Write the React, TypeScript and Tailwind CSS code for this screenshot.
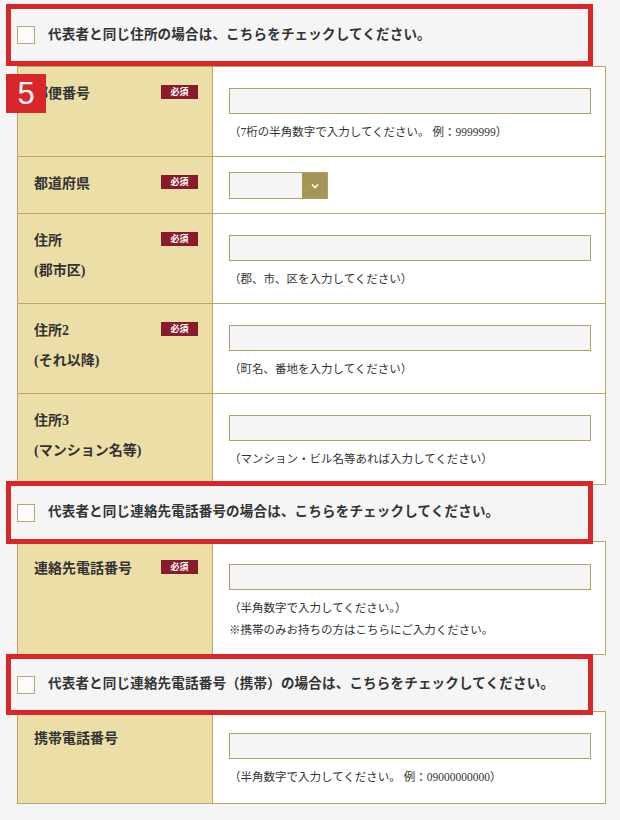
import React from 'react';

const font = { fontFamily: '"Liberation Serif", "Noto Sans CJK JP", serif' };

function CheckBar({ text, className = '' }: { text: string; className?: string }) {
  return (
    <div
      className={`relative z-10 ml-[6px] flex w-[587px] items-center border-[5px] border-[#d8272b] bg-[#f5f5f5] pl-[6px] ${className}`}
    >
      <span className="h-[18px] w-[18px] shrink-0 border-[1.5px] border-[#bba876] bg-[#fbfbfb]" />
      <span className="ml-[13px] text-[13.5px] font-bold tracking-[0.2px] text-[#333]">{text}</span>
    </div>
  );
}

interface RowProps {
  label: string[];
  required?: boolean;
  hints?: string[];
  select?: boolean;
  height: string;
  last?: boolean;
  badge?: boolean;
  inputTop?: string;
}

function Row({ label, required, hints = [], select, height, last, badge, inputTop = 'pt-[21px]' }: RowProps) {
  return (
    <div className={`relative flex ${height} ${last ? '' : 'border-b border-[#b9a66b]'}`}>
      {badge && (
        <div
          className="absolute left-[-12px] top-[7px] z-20 flex h-[39px] w-[40px] items-center justify-center bg-[#d8272b] text-[31px] leading-none text-white"
          style={{ fontFamily: '"Liberation Sans", sans-serif' }}
        >
          5
        </div>
      )}
      <div className="flex w-[195px] shrink-0 items-start justify-between border-r border-[#b9a66b] bg-[#ebdfa7]">
        <div className="pl-[16px] pt-[12px] text-[14px] font-bold leading-[30px] text-[#333]">
          {label.map((l) => (
            <div key={l}>{l}</div>
          ))}
        </div>
        {required && (
          <span className="mr-[14px] mt-[18px] flex h-[14px] w-[37px] items-center justify-center bg-[#8a1b2d] text-[9px] font-bold leading-none text-white">
            必須
          </span>
        )}
      </div>
      <div className={`flex-1 bg-white pl-[16px] ${inputTop}`}>
        {select ? (
          <div className="flex h-[27px] w-[99px] border-[1.5px] border-[#b3a064]">
            <div className="flex-1 bg-[#f5f5f5]" />
            <div className="flex w-[25px] items-center justify-center bg-[#a39656]">
              <svg width="8" height="6" viewBox="0 0 8 6">
                <path d="M1 1.5 L4 4.5 L7 1.5" stroke="#fff" strokeWidth="1.6" fill="none" />
              </svg>
            </div>
          </div>
        ) : (
          <div className="h-[26px] w-[362px] border-[1.5px] border-[#b3a064] bg-[#f5f5f5]" />
        )}
        {hints.length > 0 && (
          <div className="mt-[7px] text-[11.5px] leading-[22px] text-[#333]">
            {hints.map((h) => (
              <div key={h}>{h}</div>
            ))}
          </div>
        )}
      </div>
    </div>
  );
}

export default function App() {
  return (
    <div className="min-h-[820px] w-[620px] bg-[#f5f5f5] pt-[4px]" style={font}>
      <CheckBar text="代表者と同じ住所の場合は、こちらをチェックしてください。" className="h-[62px]" />

      <div className="ml-[17px] w-[589px] border border-[#b9a66b]">
        <Row label={['郵便番号']} required badge height="h-[90px]" hints={['（7桁の半角数字で入力してください。 例：9999999）']} />
        <Row label={['都道府県']} required select height="h-[57px]" inputTop="pt-[15px]" />
        <Row label={['住所', '(郡市区)']} required height="h-[90px]" hints={['（郡、市、区を入力してください）']} />
        <Row label={['住所2', '(それ以降)']} required height="h-[90px]" hints={['（町名、番地を入力してください）']} />
        <Row label={['住所3', '(マンション名等)']} height="h-[90px]" last hints={['（マンション・ビル名等あれば入力してください）']} />
      </div>

      <CheckBar text="代表者と同じ連絡先電話番号の場合は、こちらをチェックしてください。" className="-mt-[4px] h-[63px]" />

      <div className="-mt-[3px] ml-[17px] w-[589px] border border-[#b9a66b]">
        <Row
          label={['連絡先電話番号']}
          required
          height="h-[112px]"
          last
          inputTop="pt-[22px]"
          hints={['（半角数字で入力してください。）', '※携帯のみお持ちの方はこちらにご入力ください。']}
        />
      </div>

      <CheckBar text="代表者と同じ連絡先電話番号（携帯）の場合は、こちらをチェックしてください。" className="-mt-[1px] h-[61px]" />

      <div className="-mt-[4px] ml-[17px] w-[589px] border border-[#b9a66b]">
        <Row
          label={['携帯電話番号']}
          height="h-[91px]"
          last
          hints={['（半角数字で入力してください。 例：09000000000）']}
        />
      </div>
    </div>
  );
}
